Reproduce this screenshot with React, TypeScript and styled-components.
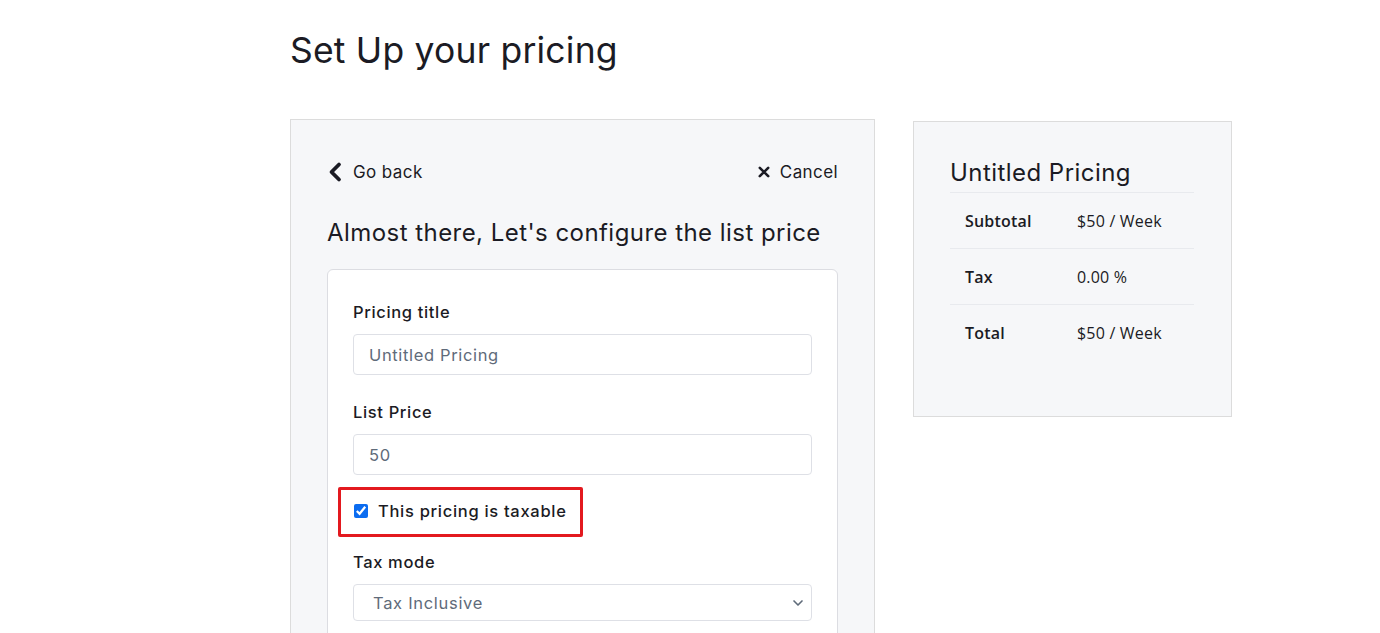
import React, { useState } from "react";
import styled, { createGlobalStyle } from "styled-components";
import { ChevronDown } from "lucide-react";

const Global = createGlobalStyle`
  body {
    margin: 0;
    background: #ffffff;
    color: #1b1b24;
    font-family: "Inter", "Noto Sans", sans-serif;
  }
  * { box-sizing: border-box; }
`;

const Page = styled.div`
  padding: 28px 0 0 290px;
`;

const PageTitle = styled.h1`
  margin: 0 0 45px;
  font-size: 35.5px;
  font-weight: 400;
  line-height: 46px;
  letter-spacing: 0.2px;
`;

const Columns = styled.div`
  display: flex;
  align-items: flex-start;
  gap: 38px;
`;

const Panel = styled.section`
  background: #f6f7f9;
  border: 1px solid #dcdcdc;
`;

const MainPanel = styled(Panel)`
  width: 585px;
  padding: 39px 36px 40px 36px;
`;

const SummaryPanel = styled(Panel)`
  width: 319px;
  height: 296px;
  margin-top: 2px;
  padding: 36px 37px 0 36px;
`;

const NavRow = styled.div`
  display: flex;
  justify-content: space-between;
  align-items: center;
  height: 26px;
`;

const NavButton = styled.button`
  display: flex;
  align-items: center;
  gap: 10px;
  padding: 0;
  border: 0;
  background: none;
  font: inherit;
  font-size: 17px;
  letter-spacing: 0.4px;
  color: #1b1b24;
  cursor: pointer;
`;

const SectionTitle = styled.h2`
  margin: 31px 0 19px;
  font-size: 24px;
  font-weight: 400;
  line-height: 34px;
  letter-spacing: 0.45px;
`;

const Card = styled.div`
  background: #ffffff;
  border: 1px solid #dcdde2;
  border-radius: 6px;
  padding: 32px 25px 30px;
`;

const Field = styled.div`
  margin-bottom: 27px;
`;

const Label = styled.label`
  display: block;
  margin-bottom: 12px;
  font-size: 16.5px;
  font-weight: 500;
  line-height: 20px;
  letter-spacing: 0.65px;
`;

const TextInput = styled.input`
  display: block;
  width: 100%;
  height: 41px;
  padding: 0 15px;
  border: 1px solid #dee0e6;
  border-radius: 4px;
  background: #ffffff;
  font: inherit;
  font-size: 16.5px;
  letter-spacing: 0.65px;
  color: #5f6b7a;
  outline: none;
  &::placeholder { color: #5f6b7a; }
`;

const CheckRow = styled.label`
  position: relative;
  display: flex;
  align-items: center;
  gap: 10px;
  margin: -3px 0 29px 1px;
  height: 24px;
  font-size: 16.5px;
  font-weight: 500;
  letter-spacing: 0.7px;
`;

const CheckBox = styled.input`
  width: 14px;
  height: 14px;
  margin: 0;
  accent-color: #0b6cf0;
`;

const Highlight = styled.span`
  position: absolute;
  left: -16px;
  top: -12px;
  width: 245px;
  height: 50px;
  border: 3.5px solid #e3191f;
  border-radius: 2px;
  pointer-events: none;
`;

const SelectWrap = styled.div`
  position: relative;
  color: #5f6b7a;
`;

const Select = styled.select`
  display: block;
  width: 100%;
  height: 37px;
  padding: 0 40px 0 19px;
  border: 1px solid #dee0e6;
  border-radius: 4px;
  background: #ffffff;
  font: inherit;
  font-size: 16.5px;
  letter-spacing: 0.7px;
  color: #5f6b7a;
  appearance: none;
  outline: none;
`;

const SelectArrow = styled(ChevronDown)`
  position: absolute;
  right: 6px;
  top: 11px;
  pointer-events: none;
`;

const SummaryTitle = styled.h3`
  margin: 0 0 4px;
  font-size: 24px;
  font-weight: 400;
  line-height: 30px;
  letter-spacing: 0.45px;
`;

const Table = styled.table`
  width: 100%;
  border-collapse: collapse;
  font-family: "Open Sans", sans-serif;
  font-size: 16px;
`;

const Row = styled.tr`
  border-top: 1px solid #e8eaee;
`;

const Cell = styled.td<{ $head?: boolean }>`
  height: 56px;
  padding: 0 15px;
  font-weight: ${(p) => (p.$head ? 600 : 400)};
  width: ${(p) => (p.$head ? "112px" : "auto")};
  letter-spacing: 0.2px;
  color: #1b1b24;
  vertical-align: middle;
`;

const summary = [
  { label: "Subtotal", value: "$50 / Week" },
  { label: "Tax", value: "0.00 %" },
  { label: "Total", value: "$50 / Week" },
];

function BackIcon() {
  return (
    <svg width="16" height="22" viewBox="0 0 16 22">
      <path
        d="M12 3.5 L4.5 11 L12 18.5"
        fill="none"
        stroke="#1b1b24"
        strokeWidth="3.8"
        strokeLinecap="round"
        strokeLinejoin="round"
      />
    </svg>
  );
}

function CloseIcon() {
  return (
    <svg width="12" height="12" viewBox="0 0 12 12">
      <path
        d="M1.8 1.8 L10.2 10.2 M10.2 1.8 L1.8 10.2"
        fill="none"
        stroke="#1b1b24"
        strokeWidth="2.6"
        strokeLinecap="round"
      />
    </svg>
  );
}

export default function App() {
  const [title, setTitle] = useState("");
  const [price, setPrice] = useState("50");
  const [taxable, setTaxable] = useState(true);
  const [mode, setMode] = useState("inclusive");

  return (
    <>
      <Global />
      <Page>
        <PageTitle>Set Up your pricing</PageTitle>
        <Columns>
          <MainPanel>
            <NavRow>
              <NavButton>
                <BackIcon />
                Go back
              </NavButton>
              <NavButton>
                <CloseIcon />
                Cancel
              </NavButton>
            </NavRow>

            <SectionTitle>Almost there, Let's configure the list price</SectionTitle>

            <Card>
              <Field>
                <Label htmlFor="title">Pricing title</Label>
                <TextInput
                  id="title"
                  placeholder="Untitled Pricing"
                  value={title}
                  onChange={(e) => setTitle(e.target.value)}
                />
              </Field>
              <Field>
                <Label htmlFor="price">List Price</Label>
                <TextInput
                  id="price"
                  value={price}
                  onChange={(e) => setPrice(e.target.value)}
                />
              </Field>

              <CheckRow>
                <Highlight />
                <CheckBox
                  type="checkbox"
                  checked={taxable}
                  onChange={(e) => setTaxable(e.target.checked)}
                />
                This pricing is taxable
              </CheckRow>

              <Field>
                <Label htmlFor="mode">Tax mode</Label>
                <SelectWrap>
                  <Select
                    id="mode"
                    value={mode}
                    onChange={(e) => setMode(e.target.value)}
                  >
                    <option value="inclusive">Tax Inclusive</option>
                    <option value="exclusive">Tax Exclusive</option>
                  </Select>
                  <SelectArrow size={16} strokeWidth={2.5} />
                </SelectWrap>
              </Field>
            </Card>
          </MainPanel>

          <SummaryPanel>
            <SummaryTitle>{title || "Untitled Pricing"}</SummaryTitle>
            <Table>
              <tbody>
                {summary.map((s) => (
                  <Row key={s.label}>
                    <Cell $head>{s.label}</Cell>
                    <Cell>{s.value}</Cell>
                  </Row>
                ))}
              </tbody>
            </Table>
          </SummaryPanel>
        </Columns>
      </Page>
    </>
  );
}
